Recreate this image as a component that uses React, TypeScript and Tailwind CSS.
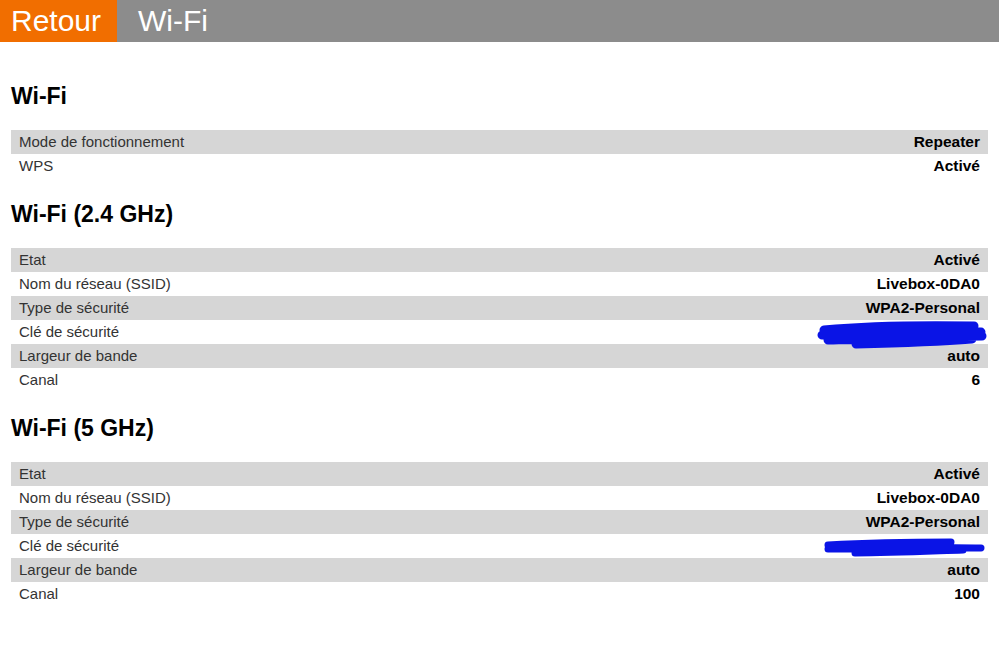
import React from "react";

type Row = { label: string; value: React.ReactNode };

function Scribble({ variant }: { variant: 1 | 2 }) {
  if (variant === 1) {
    return (
      <svg width="172" height="30" viewBox="0 0 172 30" className="block">
        <path
          d="M8 10 C40 7 100 5 158 6 M6 15 C50 13 120 11 165 12 M12 20 C60 19 120 16 166 16 M40 24 C80 23 130 21 156 19"
          stroke="#0a14e6"
          strokeWidth="9"
          strokeLinecap="round"
          fill="none"
        />
      </svg>
    );
  }
  return (
    <svg width="165" height="22" viewBox="0 0 165 22" className="block">
      <path
        d="M5 8 C40 6 80 5 128 5 M5 12 C60 12 110 10 158 11 M32 16 C70 16 110 14 140 13"
        stroke="#0a14e6"
        strokeWidth="7"
        strokeLinecap="round"
        fill="none"
      />
    </svg>
  );
}

function Section({ title, rows }: { title: string; rows: Row[] }) {
  return (
    <section>
      <h2 className="mb-[20px] h-[28px] text-[23px] font-bold leading-[28px] text-black">{title}</h2>
      <div>
        {rows.map((row, i) => (
          <div
            key={row.label}
            className={`flex h-[24px] items-center justify-between px-[8px] ${
              i % 2 === 0 ? "bg-[#d6d6d6]" : "bg-white"
            }`}
          >
            <span className="text-[15px] text-[#333333]">{row.label}</span>
            <span className="text-[15.5px] font-bold text-black">{row.value}</span>
          </div>
        ))}
      </div>
    </section>
  );
}

const WIFI: Row[] = [
  { label: "Mode de fonctionnement", value: "Repeater" },
  { label: "WPS", value: "Activé" },
];

const band = (key: 1 | 2, canal: string): Row[] => [
  { label: "Etat", value: "Activé" },
  { label: "Nom du réseau (SSID)", value: "Livebox-0DA0" },
  { label: "Type de sécurité", value: "WPA2-Personal" },
  {
    label: "Clé de sécurité",
    value: (
      <span className="relative -mr-[8px] block h-[24px] w-[172px]">
        <span className={`absolute right-0 ${key === 1 ? "top-0" : "top-[3px]"}`}>
          <Scribble variant={key} />
        </span>
      </span>
    ),
  },
  { label: "Largeur de bande", value: "auto" },
  { label: "Canal", value: canal },
];

export default function App() {
  return (
    <div className="min-h-[646px] bg-white font-['Liberation_Sans',Arial,sans-serif]">
      <header className="flex h-[42px] bg-[#8c8c8c] text-white">
        <div className="flex w-[117px] items-center bg-[#f16e00] pl-[11px] text-[30px] leading-none">Retour</div>
        <div className="flex items-center pl-[21px] text-[30px] leading-none">Wi-Fi</div>
      </header>
      <main className="flex flex-col gap-[22px] pl-[11px] pr-[11px] pt-[40px]">
        <Section title="Wi-Fi" rows={WIFI} />
        <Section title="Wi-Fi (2.4 GHz)" rows={band(1, "6")} />
        <Section title="Wi-Fi (5 GHz)" rows={band(2, "100")} />
      </main>
    </div>
  );
}
